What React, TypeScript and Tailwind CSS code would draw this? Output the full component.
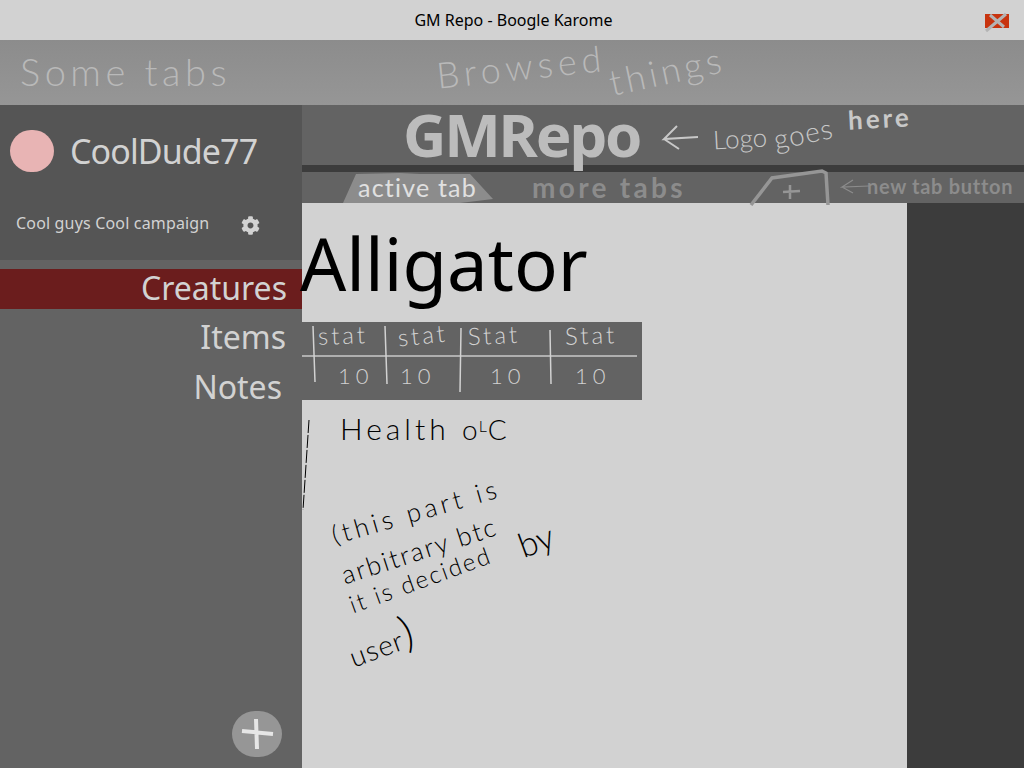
import { FaCog } from 'react-icons/fa'

const sans = "font-['Noto_Sans',sans-serif]"
// no handwriting face installed, so scribbles are light real text
const hand = "absolute font-['Lato','Noto_Sans',sans-serif] whitespace-nowrap leading-none"

function WindowClose() {
  return (
    <svg width="30" height="24" viewBox="0 0 30 24" className="shrink-0">
      <rect x="3" y="2" width="24" height="14" fill="#c8340f" />
      <path d="M4 19 L24 2 M8 3 L22 15" stroke="#b4b4b4" strokeWidth="3" fill="none" />
    </svg>
  )
}

function Stats() {
  const cols = [
    { label: 'stat', value: '10', w: 'w-[72px]', rot: '-rotate-2', labelPad: 'ml-[3px]', valuePad: 'ml-[23px]' },
    { label: 'stat', value: '10', w: 'w-[76px]', rot: '-rotate-6', labelPad: 'ml-[11px]', valuePad: 'ml-[13px]' },
    { label: 'Stat', value: '10', w: 'w-[89px]', rot: '-rotate-3', labelPad: 'ml-[5px]', valuePad: 'ml-[27px]' },
    { label: 'Stat', value: '10', w: 'w-[90px]', rot: '-rotate-2', labelPad: 'ml-[13px]', valuePad: 'ml-[23px]' },
  ]
  return (
    <div className="relative w-[340px] h-[78px] mt-[14px] bg-[#636363] pl-[13px] flex">
      <svg className="absolute inset-0" width="340" height="78" viewBox="0 0 340 78">
        <path d="M0 34 H335" stroke="#c8c8c8" strokeWidth="1.5" />
        <path d="M11 4 L13 60 M83 4 L85 62 M159 6 L158 70 M248 8 L249 62" stroke="#d2d2d2" strokeWidth="1.5" fill="none" />
      </svg>
      {cols.map((c, i) => (
        <div key={i} className={`${c.w} flex flex-col items-start font-['Lato',sans-serif] font-light text-[#d2d2d2] leading-none`}>
          <span className={`h-[34px] pt-[1px] text-[24px] tracking-[3px] ${c.labelPad} ${c.rot}`}>{c.label}</span>
          <span className={`pt-[9px] text-[22px] tracking-[5px] ${c.valuePad}`}>{c.value}</span>
        </div>
      ))}
    </div>
  )
}

export default function App() {
  return (
    <div className={`w-[1024px] h-[768px] overflow-hidden flex flex-col bg-[#636363] ${sans}`}>
      {/* window title */}
      <div className="relative h-10 shrink-0 bg-[#d2d2d2] flex items-center justify-center text-[16px] text-black pl-[3px]">
        <span>GM Repo - Boogle Karome</span>
        <div className="absolute right-[12px] top-[12px]">
          <WindowClose />
        </div>
      </div>

      {/* browser tabs, drawn by hand */}
      <div className="relative h-[65px] shrink-0 bg-gradient-to-b from-[#8c8c8c] to-[#969696] text-[#b9b9b9] z-10">
        <span className={`${hand} font-light left-[20px] top-[12px] text-[38px] tracking-[4.5px]`}>Some tabs</span>
        <span className={`${hand} font-light left-[436px] top-[8px] text-[36px] tracking-[5px] -rotate-6`}>Browsed</span>
        <span className={`${hand} font-light left-[608px] top-[12px] text-[36px] tracking-[4px] -rotate-12`}>things</span>
      </div>

      <div className="flex-1 flex min-h-0">
        {/* sidebar */}
        <aside className="relative w-[302px] shrink-0 flex flex-col bg-[#636363] text-[#d2d2d2]">
          <div className="h-[155px] bg-[#555555] px-[10px] pt-[25px]">
            <div className="flex items-center gap-[16px]">
              <div className="w-11 h-[42px] rounded-full bg-[#e8b4b4]" />
              <span className="text-[34px] leading-[42px] tracking-[-0.9px]">CoolDude77</span>
            </div>
            <div className="flex items-center mt-[39px] pl-[6px]">
              <span className="text-[16px] leading-[24px] w-[225px] tracking-[0.17px] whitespace-nowrap">Cool guys Cool campaign</span>
              <FaCog className="w-[19px] h-[19px] mt-[4px]" />
            </div>
          </div>
          <nav className="mt-[9px] flex flex-col text-[32px] leading-[38px]">
            <div className="h-10 bg-[#6b1d1d] text-right pr-[15px]">Creatures</div>
            <div className="h-10 mt-[9px] text-right pr-[16px]">Items</div>
            <div className="h-10 mt-[10px] text-right pr-[20px]">Notes</div>
          </nav>
          <button className="absolute left-[232px] top-[606px] w-[50px] h-[46px] rounded-full bg-[#969696] flex items-center justify-center">
            <svg width="36" height="34" viewBox="0 0 36 34">
              <path d="M3 14 L34 17 M17 2 L18 32" stroke="#e6e6e6" strokeWidth="4" fill="none" />
            </svg>
          </button>
        </aside>

        <main className="flex-1 flex flex-col min-w-0">
          {/* logo */}
          <div className="relative h-[60px] shrink-0 text-[#bcbcbc]">
            <span className="absolute left-[101px] top-[-7px] text-[60px] font-bold leading-[72px] tracking-[-2.2px]">GMRepo</span>
            <svg className="absolute left-[358px] top-[18px]" width="40" height="34" viewBox="0 0 40 34">
              <path d="M38 14 L4 16 L17 3 M4 16 L19 26" stroke="#c8c8c8" strokeWidth="2" fill="none" />
            </svg>
            <span className={`${hand} font-light left-[411px] top-[20px] text-[26px] -rotate-3 text-[#c8c8c8]`}>Logo</span>
            <span className={`${hand} font-light left-[471px] top-[14px] text-[28px] tracking-[1px] -rotate-12 text-[#c8c8c8]`}>goes</span>
            <span className={`${hand} font-bold left-[546px] top-[0px] text-[26px] tracking-[3px] -rotate-3 text-[#c8c8c8]`}>here</span>
          </div>
          <div className="h-[7px] shrink-0 bg-[#3c3c3c]" />

          {/* record tabs */}
          <div className="relative h-[31px] shrink-0 text-[#8c8c8c] z-10">
            <svg className="absolute left-[38px] top-0" width="156" height="34" viewBox="0 0 156 34">
              <path d="M3 31 L16 2 L60 1 L80 2 L130 2 L153 27 L120 31 L60 31 Z" fill="#8c8c8c" />
            </svg>
            <span className={`${hand} font-normal left-[56px] top-[3px] text-[25px] tracking-[1.2px] text-[#e0e0e0]`}>active tab</span>
            <span className={`${hand} font-bold left-[230px] top-[1px] text-[28px] tracking-[3.3px]`}>more tabs</span>
            <svg className="absolute left-[446px] top-[-6px]" width="90" height="42" viewBox="0 0 90 42">
              <path d="M3 39 L24 12 L74 5 L78 7 L80 39" stroke="#969696" strokeWidth="3.5" fill="none" />
              <path d="M35 26 L52 25 M42 19 L42 33" stroke="#969696" strokeWidth="2.5" fill="none" />
            </svg>
            <svg className="absolute left-[537px] top-[5px]" width="32" height="20" viewBox="0 0 32 20">
              <path d="M30 9 L3 10 L14 3 M3 10 L14 16" stroke="#8c8c8c" strokeWidth="1.2" fill="none" />
            </svg>
            <span className={`${hand} font-bold left-[565px] top-[4px] text-[20px] tracking-[0.7px]`}>new tab button</span>
          </div>

          {/* sheet */}
          <div className="flex-1 flex min-h-0">
            <div className="relative w-[605px] bg-[#d2d2d2] text-black">
              <h1 className="text-[72.5px] leading-[92px] h-[105px] pt-[14px] -ml-[2px]">Alligator</h1>
              <Stats />
              <svg className="absolute left-0 top-[215px]" width="10" height="95" viewBox="0 0 10 95">
                <path d="M7 2 L1 92" stroke="#000" strokeWidth="1" strokeDasharray="13 2" fill="none" />
              </svg>
              <span className={`${hand} font-light left-[38px] top-[210px] text-[30px] tracking-[4px]`}>Health</span>
              <span className={`${hand} font-light left-[160px] top-[212px] text-[28px] tracking-[1px]`}>
                o<span className="text-[16px] align-[8px]">L</span>C
              </span>
              <span className={`${hand} font-light left-[30px] top-[319px] text-[26px] tracking-[4px] rotate-[-16deg] origin-left`}>(this part is</span>
              <span className={`${hand} font-light left-[40px] top-[359px] text-[26px] tracking-[2px] rotate-[-18deg] origin-left`}>arbitrary btc</span>
              <span className={`${hand} font-light left-[48px] top-[390px] text-[24px] tracking-[2px] rotate-[-20deg] origin-left`}>it is decided</span>
              <span className={`${hand} font-light left-[216px] top-[320px] text-[34px] rotate-[-20deg]`}>by</span>
              <span className={`${hand} font-light left-[44px] top-[415px] text-[28px] tracking-[1px] rotate-[-20deg]`}>
                user<span className="text-[44px]">)</span>
              </span>
            </div>
            <div className="flex-1 bg-[#3c3c3c]" />
          </div>
        </main>
      </div>
    </div>
  )
}
